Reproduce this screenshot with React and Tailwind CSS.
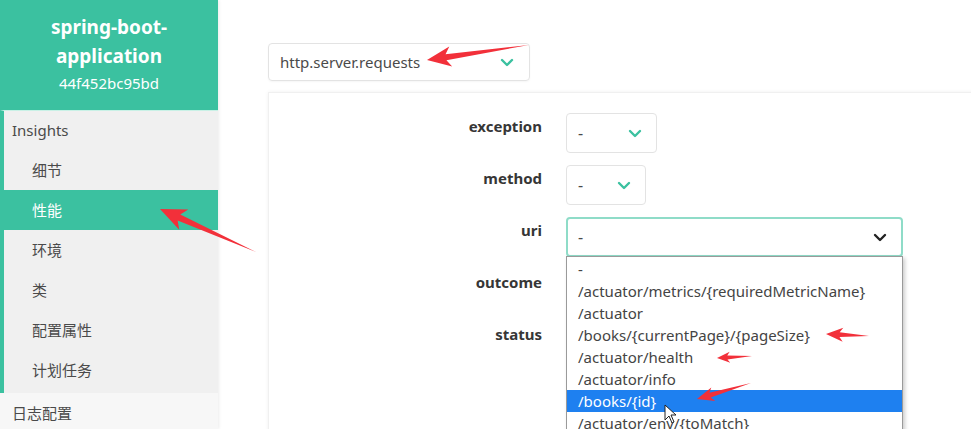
import React from "react";

const font = { fontFamily: '"Noto Sans", "Noto Sans CJK SC", sans-serif' };

function Chevron({ className = "text-[#3bc1a0]" }) {
  return (
    <svg width="14" height="9" viewBox="0 0 14 9" className={className}>
      <path d="M2 2 L7 7 L12 2" fill="none" stroke="currentColor" strokeWidth="2.4" strokeLinecap="round" strokeLinejoin="round" />
    </svg>
  );
}

// 红色标注箭头：tip 为箭头尖，tail 为尾巴末端
function arrowPoints(tip, tail, headLen, headW, neckW) {
  const dx = tail[0] - tip[0];
  const dy = tail[1] - tip[1];
  const len = Math.hypot(dx, dy);
  const ux = dx / len, uy = dy / len;
  const px = -uy, py = ux;
  const b = [tip[0] + ux * headLen, tip[1] + uy * headLen];
  const n = [tip[0] + ux * headLen * 0.8, tip[1] + uy * headLen * 0.8];
  const pts = [
    tip,
    [b[0] + px * headW, b[1] + py * headW],
    [n[0] + px * neckW, n[1] + py * neckW],
    tail,
    [n[0] - px * neckW, n[1] - py * neckW],
    [b[0] - px * headW, b[1] - py * headW],
  ];
  return pts.map((p) => p.join(",")).join(" ");
}

const arrows = [
  { tip: [427, 60], tail: [529, 45], hl: 24, hw: 10, nw: 3 },
  { tip: [160, 209], tail: [256, 252], hl: 26, hw: 11, nw: 3.2 },
  { tip: [826, 334], tail: [869, 336], hl: 17, hw: 7, nw: 2.4 },
  { tip: [717, 358], tail: [752, 356], hl: 13, hw: 5.5, nw: 2 },
  { tip: [697, 399], tail: [751, 383], hl: 17, hw: 7, nw: 2.4 },
];

const menu = ["细节", "性能", "环境", "类", "配置属性", "计划任务"];

const uris = [
  "-",
  "/actuator/metrics/{requiredMetricName}",
  "/actuator",
  "/books/{currentPage}/{pageSize}",
  "/actuator/health",
  "/actuator/info",
  "/books/{id}",
  "/actuator/env/{toMatch}",
];

export default function App() {
  return (
    <div className="relative w-[971px] h-[429px] overflow-hidden bg-white flex" style={font}>
      {/* 侧边栏 */}
      <div className="w-[218px] shrink-0 flex flex-col shadow-[1px_0_3px_rgba(0,0,0,0.08)]">
        <div className="h-[110px] bg-[#3bc1a0] text-white flex flex-col items-center pt-[13px]">
          <div className="text-[19px] font-bold leading-[29px]">spring-boot-</div>
          <div className="text-[19px] font-bold leading-[29px]">application</div>
          <div className="text-[15px] leading-[22px] mt-[1px]">44f452bc95bd</div>
        </div>
        <div className="border-l-4 border-[#3bc1a0] bg-[#f0f0f0] border-t border-t-[#c9f1e6] h-[283px] flex flex-col">
          <div className="h-[39px] flex items-center pl-[8px] text-[15px] text-[#4a4a4a]">Insights</div>
          {menu.map((m) =>
            m === "性能" ? (
              <div key={m} className="h-[40px] -ml-1 bg-[#3bc1a0] flex items-center pl-[32px] text-[15px] text-white">
                {m}
              </div>
            ) : (
              <div key={m} className="h-[40px] flex items-center pl-[28px] text-[15px] text-[#4a4a4a]">
                {m}
              </div>
            )
          )}
        </div>
        <div className="flex-1 bg-[#f7f7f7] pl-[12px] pt-[9px] text-[15px] text-[#4a4a4a]">日志配置</div>
      </div>

      {/* 主内容 */}
      <div className="flex-1 pl-[50px] pt-[43px]">
        <div className="w-[262px] h-[38px] border border-[#e3e3e3] rounded-[4px] flex items-center justify-between pl-[11px] pr-[15px] shadow-[0_1px_2px_rgba(0,0,0,0.04)]">
          <span className="text-[15px] text-[#4a4a4a]">http.server.requests</span>
          <Chevron />
        </div>

        <div className="mt-[11px] h-[400px] -mr-4 border-l border-t border-[#f0f0f0] shadow-[0_0_4px_rgba(0,0,0,0.06)] pt-[20px]">
          <div className="grid grid-cols-[273px_auto] gap-x-[24px] gap-y-[12px] items-start">
            <div className="text-right text-[15px] font-bold text-[#363636] pt-[2px]">exception</div>
            <div className="w-[91px] h-[40px] border border-[#e3e3e3] rounded-[4px] flex items-center justify-between pl-[11px] pr-[14px] text-[#4a4a4a]">
              <span>-</span>
              <Chevron />
            </div>
            <div className="text-right text-[15px] font-bold text-[#363636] pt-[2px]">method</div>
            <div className="w-[80px] h-[40px] border border-[#e3e3e3] rounded-[4px] flex items-center justify-between pl-[11px] pr-[14px] text-[#4a4a4a]">
              <span>-</span>
              <Chevron />
            </div>
            <div className="text-right text-[15px] font-bold text-[#363636] pt-[2px]">uri</div>
            <div className="relative w-[337px]">
              <div className="h-[40px] border-2 border-[#8fdcc8] rounded-[4px] flex items-center justify-between pl-[10px] pr-[14px] text-[#4a4a4a]">
                <span>-</span>
                <Chevron className="text-[#222]" />
              </div>
              <div className="absolute left-0 top-[39px] w-[337px] bg-white border border-[#9a9a9a] shadow-[2px_2px_4px_rgba(0,0,0,0.2)] pt-[1px] z-10">
                {uris.map((u) => (
                  <div
                    key={u}
                    className={
                      u === "/books/{id}"
                        ? "h-[22px] leading-[22px] px-[11px] text-[15px] bg-[#1e80f0] text-white"
                        : "h-[22px] leading-[22px] px-[11px] text-[15px] text-[#444]"
                    }
                  >
                    {u}
                  </div>
                ))}
              </div>
            </div>
            <div className="text-right text-[15px] font-bold text-[#363636] pt-[2px] h-[40px]">outcome</div>
            <div />
            <div className="text-right text-[15px] font-bold text-[#363636] pt-[2px] h-[40px]">status</div>
            <div />
          </div>
        </div>
      </div>

      {/* 鼠标指针 */}
      <svg className="absolute left-[664px] top-[404px] z-20" width="14" height="20" viewBox="0 0 14 20">
        <path d="M1 1 L1 16 L5 12 L8 19 L10 18 L7 11 L12 11 Z" fill="white" stroke="#222" strokeWidth="1" strokeLinejoin="round" />
      </svg>

      {/* 红色标注 */}
      <svg className="absolute inset-0 z-30 pointer-events-none" width="971" height="429">
        {arrows.map((a, i) => (
          <polygon key={i} points={arrowPoints(a.tip, a.tail, a.hl, a.hw, a.nw)} fill="#f2303a" />
        ))}
      </svg>
    </div>
  );
}
